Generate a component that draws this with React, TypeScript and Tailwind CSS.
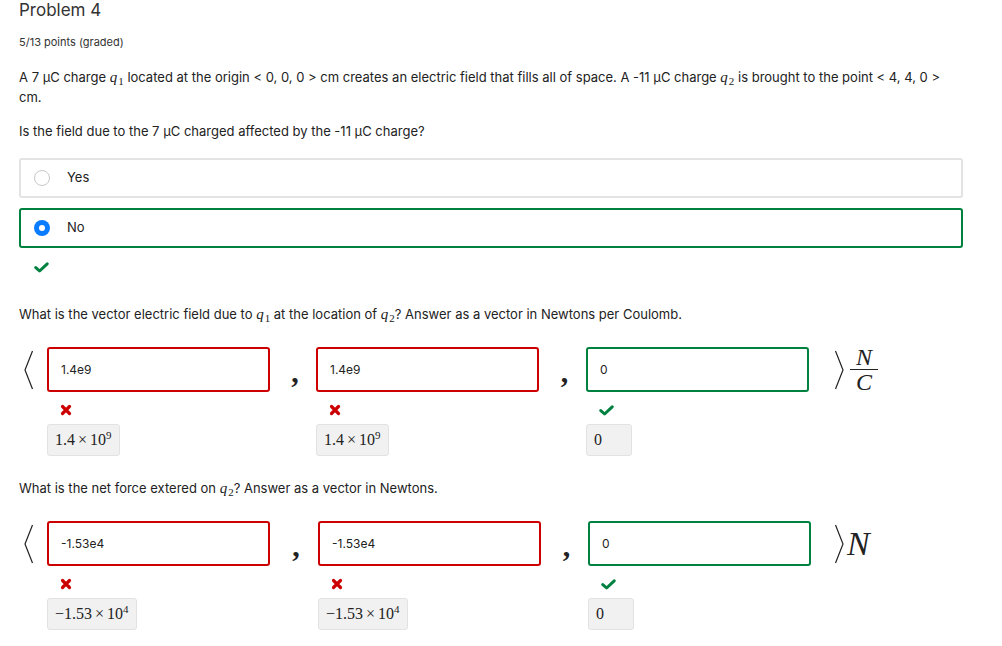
import React from "react";

const sans = { fontFamily: "Inter, 'Noto Sans', sans-serif" };
const serif = { fontFamily: "'Liberation Serif', 'DejaVu Serif', serif" };

function Q({ n }: { n: string }) {
  return (
    <span style={serif} className="text-[15px] leading-none whitespace-nowrap">
      <i>q</i>
      <span className="relative top-[3px] ml-[1px] text-[11px] leading-none">{n}</span>
    </span>
  );
}

function XMark() {
  return (
    <svg width="12" height="12" viewBox="0 0 12 12">
      <path d="M2.5 2.5 L9.5 9.5 M9.5 2.5 L2.5 9.5" stroke="#c00" strokeWidth="3.2" strokeLinecap="round" />
    </svg>
  );
}

function Check() {
  return (
    <svg width="15" height="11" viewBox="0 0 15 11">
      <path d="M1.8 5.6 L5.6 9 L13.2 1.8" stroke="#00813f" strokeWidth="3" fill="none" strokeLinecap="round" strokeLinejoin="round" />
    </svg>
  );
}

function Cell({ value, ok, answer }: { value: string; ok: boolean; answer: React.ReactNode }) {
  return (
    <div className="flex flex-col w-[223px] shrink-0">
      <div
        className={`h-[45px] rounded-[3px] border-2 flex items-center pl-[12px] text-[12px] text-[#222] ${ok ? "border-[#00813f]" : "border-[#c00]"}`}
      >
        {value}
      </div>
      <div className="mt-[12px] pl-[13px] h-[12px] flex items-center">{ok ? <Check /> : <XMark />}</div>
      <div className="mt-[8px]">
        <span
          style={serif}
          className="inline-flex items-center h-[32px] px-[7px] bg-[#f1f1f1] border border-[#e2e2e2] rounded-[3px] text-[16px] text-[#222]"
        >
          {answer}
        </span>
      </div>
    </div>
  );
}

function Comma({ w }: { w: number }) {
  return (
    <div className="shrink-0 flex justify-center h-[45px] items-center" style={{ width: w }}>
      <span style={serif} className="text-[30px] font-bold text-[#222] leading-none mt-[4px] ml-[4px]">
        ,
      </span>
    </div>
  );
}

function Sci({ m, e }: { m: string; e: string }) {
  return (
    <span className="whitespace-nowrap">
      {m}
      <span className="mx-[3px]">×</span>10
      <sup className="text-[11px] top-[-6px]">{e}</sup>
    </span>
  );
}

function LAngle() {
  return (
    <div className="w-[28px] shrink-0 h-[45px] flex items-center">
      <svg width="14" height="40" viewBox="0 0 14 40" className="ml-[3px]">
        <path d="M10.5 1 L3 20 L10.5 39" stroke="#222" strokeWidth="1.2" fill="none" />
      </svg>
    </div>
  );
}

function RAngle() {
  return (
    <svg width="14" height="40" viewBox="0 0 14 40">
      <path d="M3.5 1 L11 20 L3.5 39" stroke="#222" strokeWidth="1.2" fill="none" />
    </svg>
  );
}

export default function App() {
  return (
    <div style={sans} className="bg-white min-h-[646px] w-[1002px] px-[19px] text-[#222]">
      <h2 className="text-[17px] leading-[20px] text-[#333] font-normal">Problem 4</h2>
      <div className="mt-[14px] text-[11px] leading-[16px] text-[#333]">5/13 points (graded)</div>
      <p className="mt-[17px] text-[13px] leading-[20px] pr-[20px]">
        A 7 μC charge <Q n="1" /> located at the origin &lt; 0, 0, 0 &gt; cm creates an electric field that fills all of space. A
        -11 μC charge <Q n="2" /> is brought to the point &lt; 4, 4, 0 &gt; cm.
      </p>
      <p className="mt-[14px] text-[13px] leading-[20px]">Is the field due to the 7 μC charged affected by the -11 μC charge?</p>

      <div className="mt-[17px] w-[944px] h-[40px] border-2 border-[#e3e3e3] rounded-[3px] flex items-center pl-[13px]">
        <span className="w-[16px] h-[16px] rounded-full border border-[#c8c8c8] bg-white" />
        <span className="ml-[17px] text-[13px]">Yes</span>
      </div>
      <div className="mt-[10px] w-[944px] h-[40px] border-2 border-[#00813f] rounded-[3px] flex items-center pl-[13px]">
        <span className="w-[16px] h-[16px] rounded-full bg-[#0a7cff] flex items-center justify-center">
          <span className="w-[6px] h-[6px] rounded-full bg-white" />
        </span>
        <span className="ml-[17px] text-[13px]">No</span>
      </div>
      <div className="mt-[14px] pl-[15px] h-[11px] flex items-center">
        <Check />
      </div>

      <p className="mt-[31px] text-[13px] leading-[20px]">
        What is the vector electric field due to <Q n="1" /> at the location of <Q n="2" />? Answer as a vector in Newtons per
        Coulomb.
      </p>

      <div className="mt-[23px] flex items-start">
        <LAngle />
        <Cell value="1.4e9" ok={false} answer={<Sci m="1.4" e="9" />} />
        <Comma w={46} />
        <Cell value="1.4e9" ok={false} answer={<Sci m="1.4" e="9" />} />
        <Comma w={47} />
        <Cell value="0" ok={true} answer={<span className="pr-[22px]">0</span>} />
        <div className="h-[45px] flex items-center ml-[23px]">
          <RAngle />
          <span style={serif} className="ml-[4px] inline-flex flex-col items-center text-[24px] leading-[20px] italic text-[#222]">
            <span>N</span>
            <span className="w-[28px] h-[1.5px] bg-[#222] my-[2px]" />
            <span>C</span>
          </span>
        </div>
      </div>

      <p className="mt-[22px] text-[13px] leading-[20px]">
        What is the net force extered on <Q n="2" />? Answer as a vector in Newtons.
      </p>

      <div className="mt-[23px] flex items-start">
        <LAngle />
        <Cell value="-1.53e4" ok={false} answer={<Sci m="−1.53" e="4" />} />
        <Comma w={48} />
        <Cell value="-1.53e4" ok={false} answer={<Sci m="−1.53" e="4" />} />
        <Comma w={47} />
        <Cell value="0" ok={true} answer={<span className="pr-[22px]">0</span>} />
        <div className="h-[45px] flex items-center ml-[21px]">
          <RAngle />
          <span style={serif} className="ml-[1px] text-[34px] italic text-[#222] leading-none">
            N
          </span>
        </div>
      </div>
    </div>
  );
}
